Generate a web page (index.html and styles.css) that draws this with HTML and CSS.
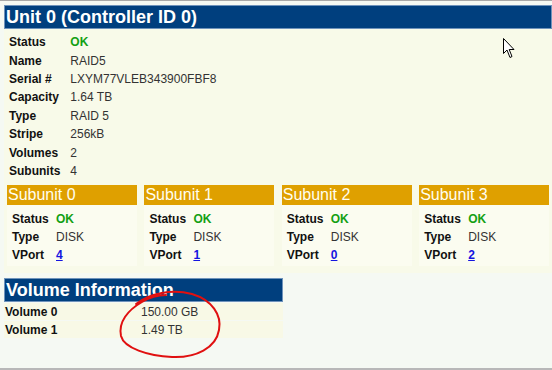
FILE: index.html
```html
<!DOCTYPE html>
<html>
<head>
<meta charset="utf-8">
<link rel="stylesheet" href="styles.css">
</head>
<body>
<div class="page">
  <section class="unit">
    <h1 class="bar">Unit 0 (Controller ID 0)</h1>
    <div class="panel">
      <table class="props">
        <tr><td class="k">Status</td><td class="ok">OK</td></tr>
        <tr><td class="k">Name</td><td class="v">RAID5</td></tr>
        <tr><td class="k">Serial #</td><td class="v">LXYM77VLEB343900FBF8</td></tr>
        <tr><td class="k">Capacity</td><td class="v">1.64 TB</td></tr>
        <tr><td class="k">Type</td><td class="v">RAID 5</td></tr>
        <tr><td class="k">Stripe</td><td class="v">256kB</td></tr>
        <tr><td class="k">Volumes</td><td class="v">2</td></tr>
        <tr><td class="k">Subunits</td><td class="v">4</td></tr>
      </table>
      <div class="subunits">
        <div class="sub">
          <h2 class="sub-bar">Subunit 0</h2>
          <dl class="sub-body">
            <dt>Status</dt><dd class="ok">OK</dd>
            <dt>Type</dt><dd>DISK</dd>
            <dt>VPort</dt><dd><a href="#">4</a></dd>
          </dl>
        </div>
        <div class="sub">
          <h2 class="sub-bar">Subunit 1</h2>
          <dl class="sub-body">
            <dt>Status</dt><dd class="ok">OK</dd>
            <dt>Type</dt><dd>DISK</dd>
            <dt>VPort</dt><dd><a href="#">1</a></dd>
          </dl>
        </div>
        <div class="sub">
          <h2 class="sub-bar">Subunit 2</h2>
          <dl class="sub-body">
            <dt>Status</dt><dd class="ok">OK</dd>
            <dt>Type</dt><dd>DISK</dd>
            <dt>VPort</dt><dd><a href="#">0</a></dd>
          </dl>
        </div>
        <div class="sub">
          <h2 class="sub-bar">Subunit 3</h2>
          <dl class="sub-body">
            <dt>Status</dt><dd class="ok">OK</dd>
            <dt>Type</dt><dd>DISK</dd>
            <dt>VPort</dt><dd><a href="#">2</a></dd>
          </dl>
        </div>
      </div>
    </div>
  </section>
  <section class="volumes">
    <h1 class="bar">Volume Information</h1>
    <table class="vol-table">
      <tr><td class="k">Volume 0</td><td class="v">150.00 GB</td></tr>
      <tr><td class="k">Volume 1</td><td class="v">1.49 TB</td></tr>
    </table>
  </section>
  <svg class="scribble" width="120" height="80" viewBox="110 285 120 80">
    <path d="M136 304 C150 293 172 289 192 294 C212 300 222 315 219 330 C216 348 196 358 172 357 C148 356 124 348 121 336 C118 322 128 310 142 302 C150 297 158 295 166 295" fill="none" stroke="#e01010" stroke-width="2" stroke-linecap="round"/>
  </svg>
  <svg class="cursor" width="13" height="21" viewBox="0 0 13 21">
    <path d="M0.5 0.5 L0.5 15.5 L4 12 L7 19.5 L9 18.5 L6.2 11.5 L11 11.5 Z" fill="#fff" stroke="#000" stroke-width="1"/>
  </svg>
</div>
</body>
</html>
```

FILE: styles.css
```css
html, body {
  margin: 0;
  padding: 0;
}

body {
  font-family: "Liberation Sans", Arial, sans-serif;
  background: #f5f9f3;
}

.page {
  position: relative;
  width: 552px;
  height: 370px;
  box-sizing: border-box;
  overflow: hidden;
  border-top: 1px solid #a8a8a8;
  border-bottom: 2px solid #b8b8b8;
  background: #f5f9f3;
  padding: 4px 0 0 4px;
}

.bar {
  margin: 0;
  height: 24px;
  box-sizing: border-box;
  border: 1px solid #6f93bb;
  background: #003f7e;
  color: #ffffff;
  font-size: 18px;
  font-weight: bold;
  line-height: 22px;
  padding-left: 1px;
  white-space: nowrap;
}

.panel {
  background: #f8fae9;
  padding: 4px 3px 7px 3px;
}

.props {
  border-collapse: collapse;
  font-size: 12px;
}

.props td {
  height: 18.43px;
  padding: 0;
  line-height: 14px;
}

.props td.k {
  font-weight: bold;
  color: #111;
  padding: 0 10px 0 2px;
}

.v, .sub-body dd {
  color: #333333;
}

.ok {
  color: #13a013;
  font-weight: bold;
}

.subunits {
  display: grid;
  grid-template-columns: repeat(4, 1fr);
  column-gap: 7.5px;
  margin-top: 5px;
}

.sub {
  background: #fbfcf0;
}

.sub-bar {
  margin: 0;
  height: 20px;
  background: #dfa000;
  color: #fffef0;
  font-size: 16px;
  font-weight: normal;
  line-height: 20px;
  padding-left: 1px;
}

.sub-body {
  margin: 0;
  padding: 5px 0 2px 5px;
  display: grid;
  grid-template-columns: 44px 1fr;
  grid-auto-rows: 18px;
  align-items: center;
  font-size: 12px;
}

.sub-body dt {
  font-weight: bold;
  color: #111;
}

.sub-body dd {
  margin: 0;
}

.sub-body dd.ok {
  color: #13a013;
}

.sub-body a {
  color: #1414e0;
  font-weight: bold;
  text-decoration: underline;
}

.volumes {
  width: 279px;
  margin-top: 5px;
}

.vol-table {
  width: 279px;
  border-collapse: separate;
  border-spacing: 0 1px;
  font-size: 12px;
}

.vol-table td {
  background: #f8f9e6;
  height: 17px;
  padding: 0;
}

.vol-table td.k {
  width: 136px;
  font-weight: bold;
  color: #111;
  padding-left: 1px;
}

.scribble {
  position: absolute;
  left: 110px;
  top: 284px;
}

.cursor {
  position: absolute;
  left: 503px;
  top: 37px;
}
```
